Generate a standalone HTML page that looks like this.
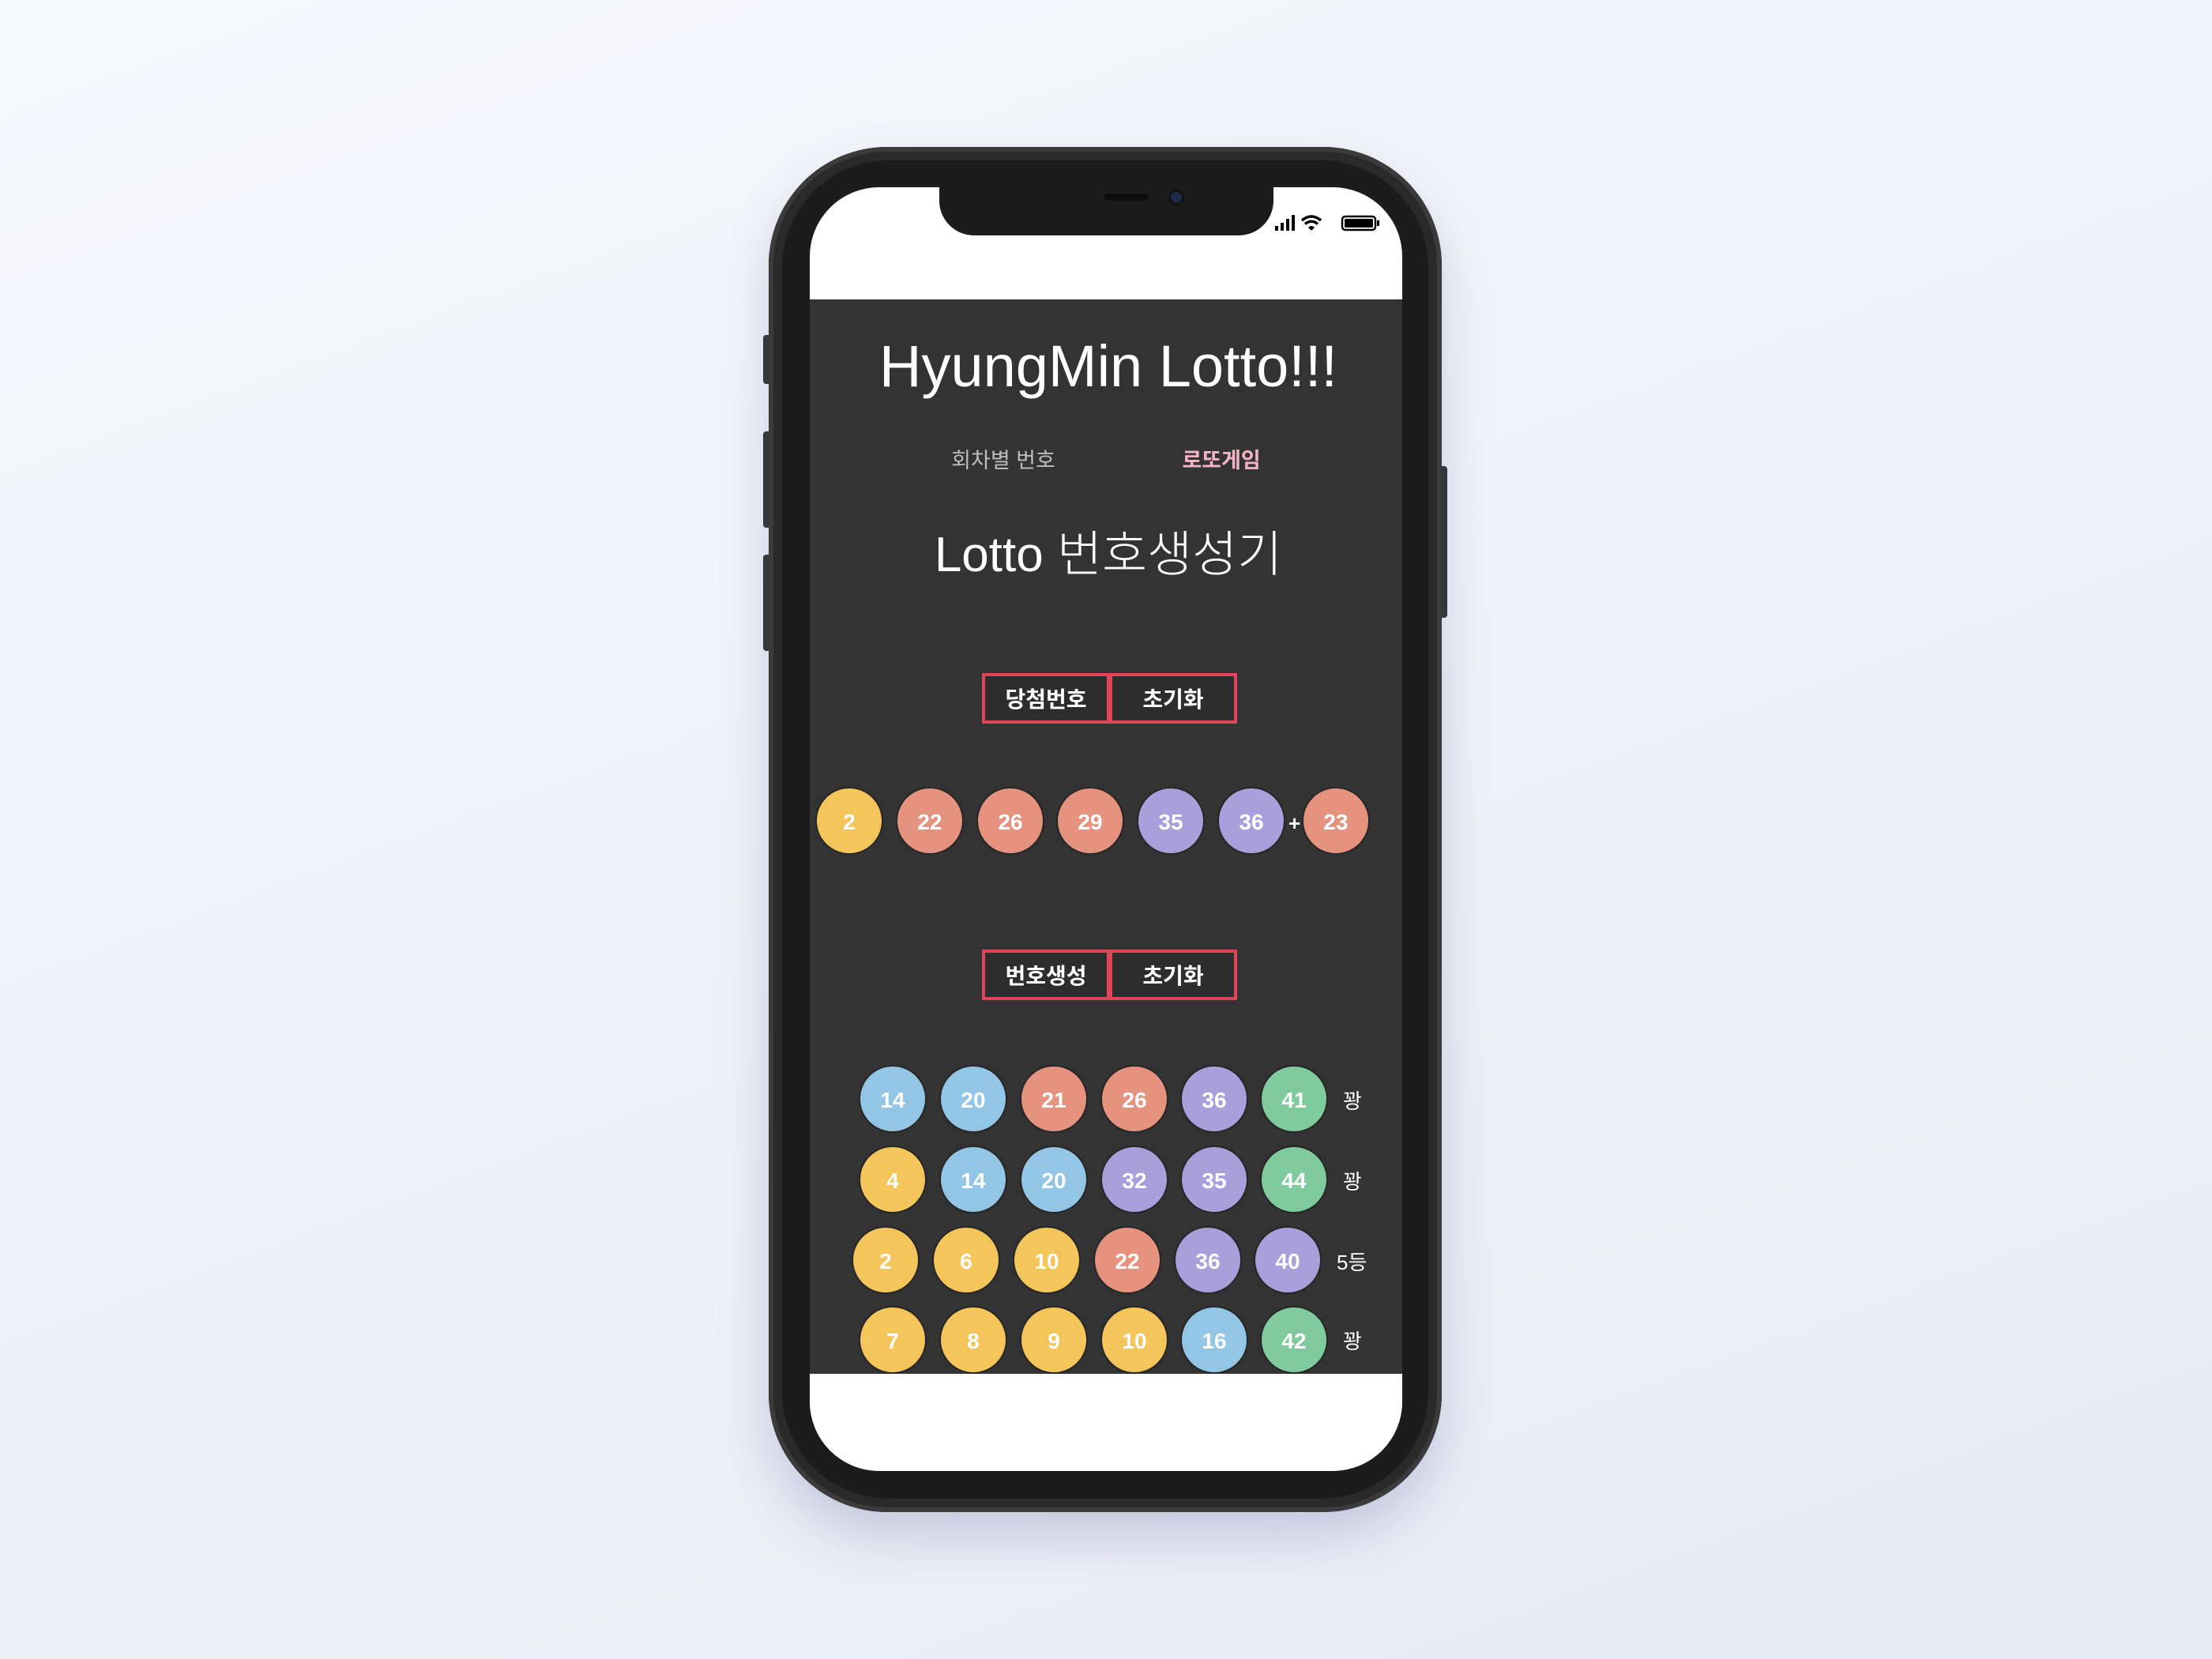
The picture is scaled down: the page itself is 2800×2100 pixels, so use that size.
<!DOCTYPE html>
<html><head><meta charset="utf-8"><style>
*{margin:0;padding:0;box-sizing:border-box}
body{width:2800px;height:2100px;overflow:hidden;background:linear-gradient(160deg,#f7f8fc 0%,#eef0f7 60%,#e7ebf5 100%);position:relative;font-family:"Liberation Sans","Noto Sans CJK KR",sans-serif}
.abs{position:absolute}
.phone{left:973px;top:186px;width:852px;height:1728px;border-radius:150px;background:#2a2a2a;box-shadow:0 0 0 6px #3b3b3b inset,0 30px 60px rgba(80,90,150,.25)}
.phone2{left:990px;top:203px;width:818px;height:1694px;border-radius:135px;background:#1c1c1c}
.screen{left:1025px;top:237px;width:750px;height:1625px;border-radius:88px;background:#fff;overflow:hidden}
.dark{left:0;top:142px;width:750px;height:1360px;background:#333}
.notch{left:1189px;top:230px;width:423px;height:68px;background:#1c1c1c;border-radius:0 0 44px 44px}
.btnside{background:#333;border-radius:4px}
.t{color:#fff;text-align:center;white-space:nowrap}
.ball{position:absolute;width:82px;height:82px;border-radius:50%;color:#fff;font-weight:bold;font-size:28px;line-height:86px;text-align:center;box-shadow:0 0 0 2px #262626;font-family:"Liberation Sans Narrow","Liberation Sans",sans-serif}
.y{background:#f4c55b}.r{background:#e5927f}.p{background:#a89fdb}.b{background:#93c5e5}.g{background:#7fcb9e}
.bx{position:absolute;height:64px;border:4px solid #e0455a;background:#2d2d2d;color:#fff;font-weight:bold;font-size:28px;line-height:60px;text-align:center}
.lbl{position:absolute;color:#fff;font-size:26px;line-height:40px}
</style></head><body>
<div class="abs btnside" style="left:966px;top:424px;width:10px;height:62px"></div>
<div class="abs btnside" style="left:966px;top:546px;width:10px;height:122px"></div>
<div class="abs btnside" style="left:966px;top:702px;width:10px;height:122px"></div>
<div class="abs btnside" style="left:1822px;top:590px;width:10px;height:192px"></div>
<div class="abs phone"></div>
<div class="abs phone2"></div>
<div class="abs screen">
  <div class="abs dark">
    <div class="abs t" style="left:0;width:756px;top:42px;font-size:74px;font-weight:300;letter-spacing:0px">HyungMin Lotto!!!</div>
    <div class="abs t" style="left:170px;width:150px;top:182px;font-size:27px;color:#bdbdbd">회차별 번호</div>
    <div class="abs t" style="left:446px;width:150px;top:182px;font-size:27px;color:#f2b4c4;font-weight:bold">로또게임</div>
    <div class="abs t" style="left:0;width:756px;top:272px;font-size:62px;font-weight:300">Lotto 번호생성기</div>
  </div>
</div>
<div class="abs notch"></div>
<div class="abs" style="left:1482px;top:243px;width:14px;height:14px;border-radius:50%;background:#1d2b4a;box-shadow:0 0 0 3px #111"></div>
<div class="abs" style="left:1398px;top:245px;width:56px;height:9px;border-radius:5px;background:#0e0e0e"></div>
<svg class="abs" style="left:1612px;top:268px" width="140" height="28" viewBox="0 0 140 28">
<rect x="2" y="18" width="4" height="6" fill="#000"/><rect x="9" y="14" width="4" height="10" fill="#000"/><rect x="16" y="9" width="4" height="15" fill="#000"/><rect x="23" y="4" width="4" height="20" fill="#000"/>
<path d="M36 11 Q48 1 60 11" stroke="#000" stroke-width="3.5" fill="none"/><path d="M40 15.5 Q48 9 56 15.5" stroke="#000" stroke-width="3.5" fill="none"/><path d="M44 20 L48 24 L52 20 Q48 16 44 20Z" fill="#000"/>
<rect x="87" y="6" width="42" height="17" rx="4" stroke="#000" stroke-width="2.5" fill="none"/><rect x="90" y="9" width="36" height="11" rx="1.5" fill="#000"/><rect x="131" y="11" width="3" height="7" fill="#000"/>
</svg>
<div class="bx" style="left:1243px;top:852px;width:162px">당첨번호</div>
<div class="bx" style="left:1404px;top:852px;width:162px">초기화</div>
<div class="ball y" style="left:1034px;top:998px">2</div>
<div class="ball r" style="left:1136px;top:998px">22</div>
<div class="ball r" style="left:1238px;top:998px">26</div>
<div class="ball r" style="left:1339px;top:998px">29</div>
<div class="ball p" style="left:1441px;top:998px">35</div>
<div class="ball p" style="left:1543px;top:998px">36</div>
<div class="lbl" style="left:1631px;top:1022px;font-weight:bold">+</div>
<div class="ball r" style="left:1650px;top:998px">23</div>
<div class="bx" style="left:1243px;top:1202px;width:162px">번호생성</div>
<div class="bx" style="left:1404px;top:1202px;width:162px">초기화</div>

<div class="ball b" style="left:1089px;top:1350px">14</div>
<div class="ball b" style="left:1191px;top:1350px">20</div>
<div class="ball r" style="left:1293px;top:1350px">21</div>
<div class="ball r" style="left:1395px;top:1350px">26</div>
<div class="ball p" style="left:1496px;top:1350px">36</div>
<div class="ball g" style="left:1597px;top:1350px">41</div>
<div class="lbl" style="left:1700px;top:1374px">꽝</div>

<div class="ball y" style="left:1089px;top:1452px">4</div>
<div class="ball b" style="left:1191px;top:1452px">14</div>
<div class="ball b" style="left:1293px;top:1452px">20</div>
<div class="ball p" style="left:1395px;top:1452px">32</div>
<div class="ball p" style="left:1496px;top:1452px">35</div>
<div class="ball g" style="left:1597px;top:1452px">44</div>
<div class="lbl" style="left:1700px;top:1476px">꽝</div>

<div class="ball y" style="left:1080px;top:1554px">2</div>
<div class="ball y" style="left:1182px;top:1554px">6</div>
<div class="ball y" style="left:1284px;top:1554px">10</div>
<div class="ball r" style="left:1386px;top:1554px">22</div>
<div class="ball p" style="left:1488px;top:1554px">36</div>
<div class="ball p" style="left:1589px;top:1554px">40</div>
<div class="lbl" style="left:1692px;top:1578px">5등</div>

<div class="ball y" style="left:1089px;top:1655px">7</div>
<div class="ball y" style="left:1191px;top:1655px">8</div>
<div class="ball y" style="left:1293px;top:1655px">9</div>
<div class="ball y" style="left:1395px;top:1655px">10</div>
<div class="ball b" style="left:1496px;top:1655px">16</div>
<div class="ball g" style="left:1597px;top:1655px">42</div>
<div class="lbl" style="left:1700px;top:1678px">꽝</div>
<div class="abs" style="left:1025px;top:1739px;width:750px;height:123px;background:#fff;border-radius:0 0 88px 88px"></div>
</body></html>
